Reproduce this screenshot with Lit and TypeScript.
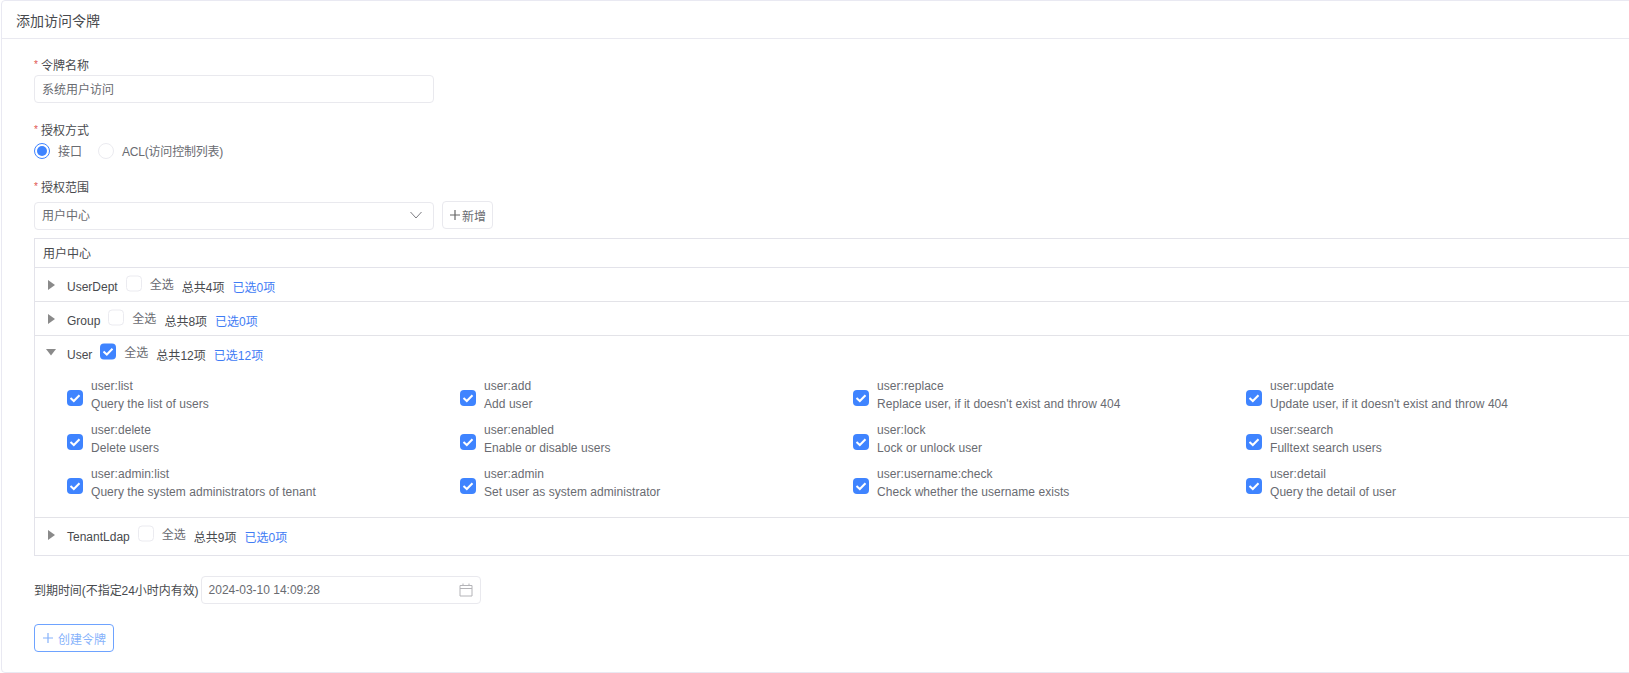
import { LitElement, html, css, svg } from "lit";
import { customElement } from "lit/decorators.js";

const items = [
  ["user:list", "Query the list of users"],
  ["user:add", "Add user"],
  ["user:replace", "Replace user, if it doesn't exist and throw 404"],
  ["user:update", "Update user, if it doesn't exist and throw 404"],
  ["user:delete", "Delete users"],
  ["user:enabled", "Enable or disable users"],
  ["user:lock", "Lock or unlock user"],
  ["user:search", "Fulltext search users"],
  ["user:admin:list", "Query the system administrators of tenant"],
  ["user:admin", "Set user as system administrator"],
  ["user:username:check", "Check whether the username exists"],
  ["user:detail", "Query the detail of user"],
];

const check = svg`<svg class="tick" viewBox="0 0 16 16" width="16" height="16"><path d="M3.5 8 L6.8 11 L12.5 5.2" fill="none" stroke="#fff" stroke-width="2"/></svg>`;

@customElement("app-root")
export class AppRoot extends LitElement {
  static styles = css`
    :host {
      display: block;
      width: 1629px;
      height: 673px;
      overflow: hidden;
      background: #fff;
      font-family: "Liberation Sans", "Noto Sans CJK SC", sans-serif;
      font-size: 12px;
      color: #484a4e;
      box-sizing: border-box;
    }
    * { box-sizing: border-box; }
    .card {
      width: 1700px;
      height: 673px;
      margin-left: 1px;
      border: 1px solid #e9e9f2;
      border-radius: 4px;
      background: #fff;
    }
    .head {
      height: 38px;
      padding-left: 14px;
      display: flex;
      align-items: center;
      font-size: 14px;
      color: #484a4e;
      border-bottom: 1px solid #e9e9f0;
    }
    .body { padding: 15px 0 0 32px; width: 1670px; }
    .label { height: 21px; display: flex; align-items: center; }
    .star { color: #e0544f; width: 7px; font-size: 10px; }
    .input {
      height: 28px;
      border: 1px solid #e9e9ee;
      border-radius: 4px;
      display: flex;
      align-items: center;
      padding: 0 7px 2px;
      color: #696b71;
      background: #fff;
    }
    .w400 { width: 400px; }
    .f1 { margin-bottom: 16px; }
    .radios { display: flex; align-items: center; height: 21px; color: #696b71; margin-bottom: 15px; }
    .radio { width: 16px; height: 16px; border-radius: 50%; border: 1px solid #ebebf0; margin-right: 8px; flex: none; }
    .radio.on { border-color: #3f84ff; display: flex; align-items: center; justify-content: center; }
    .radio.on::after { content: ""; width: 10px; height: 10px; border-radius: 50%; background: #3f84ff; }
    .r1 { margin-right: 16px; }
    .acl { letter-spacing: -0.2px; }
    .selrow { display: flex; align-items: flex-start; margin-top: 5px; margin-bottom: 8px; }
    .sel { justify-content: space-between; padding-right: 11px; padding-bottom: 3px; }
    .add {
      margin-left: 8px;
      margin-top: -1px;
      width: 51px;
      height: 28px;
      border: 1px solid #e9e9ee;
      border-radius: 4px;
      display: flex;
      align-items: center;
      justify-content: center;
      color: #696b71;
      font-size: 12px;
      gap: 1px;
    }
    .box { width: 1640px; border: 1px solid #e3e3ea; }
    .boxhead { height: 29px; padding-left: 8px; padding-bottom: 2px; display: flex; align-items: center; border-bottom: 1px solid #e3e3ea; }
    .row { border-bottom: 1px solid #e3e3e8; }
    .row:last-child { border-bottom: 0; }
    .rowhead { height: 33px; display: flex; align-items: center; padding-left: 13px; }
    .last .rowhead { height: 37px; padding-bottom: 4px; }
    .arrow { width: 19px; flex: none; display: flex; }
    .open-arrow { margin-left: -2px; }
    .name { margin-right: 8px; transform: translateY(2px); }
    .cb {
      width: 16px; height: 16px; flex: none;
      border: 1px solid #ebebf0;
      border-radius: 4px;
      background: #fff;
      display: block;
    }
    .cb.on { background: #3f84ff; border: 0; }
    .tick { display: block; }
    .up { transform: translateY(-1.5px); }
    .all { margin-left: 8px; color: #696b71; margin-right: 8px; transform: translateY(-1px); }
    .total { margin-right: 8px; transform: translateY(2px); }
    .sel-count { color: #3f7cf5; transform: translateY(2px); }
    .grid {
      display: grid;
      grid-template-columns: repeat(4, 393px);
      grid-auto-rows: 44px;
      padding: 5px 0 0 32px;
      height: 148px;
    }
    .item { display: flex; align-items: center; }
    .item .cb { margin-right: 8px; margin-top: 4px; }
    .txt { color: #696b71; line-height: 18px; margin-bottom: 2px; letter-spacing: 0.05px; }
    .txt div { white-space: nowrap; }
    .datef { display: flex; align-items: center; margin-top: 20px; margin-bottom: 20px; }
    .datel { margin-right: 2px; padding-bottom: 1px; white-space: nowrap; letter-spacing: -0.05px; }
    .date { width: 280px; justify-content: space-between; padding-right: 7px; padding-bottom: 0; }
    .create {
      width: 80px;
      height: 28px;
      border: 1px solid #6ea3ff;
      border-radius: 4px;
      color: #86b2fb;
      display: flex;
      align-items: center;
      justify-content: center;
      gap: 4px;
    }
  `;

  cb(on: boolean, up = false) {
    return html`<span class="cb ${on ? "on" : ""} ${up ? "up" : ""}">${on ? check : ""}</span>`;
  }

  row(name: string, total: number, sel: number, open = false, last = false) {
    return html`<div class="row ${last ? "last" : ""}">
      <div class="rowhead">
        <span class="arrow">
          ${open
            ? html`<svg class="open-arrow" width="10" height="7" viewBox="0 0 10 7"><path d="M0 0H10L5 6.5Z" fill="#8a8a8a"/></svg>`
            : html`<svg width="7" height="10" viewBox="0 0 7 10"><path d="M0 0V10L7 5Z" fill="#8a8a8a"/></svg>`}
        </span>
        <span class="name">${name}</span>
        ${this.cb(open, true)}
        <span class="all">全选</span>
        <span class="total">总共${total}项</span>
        <span class="sel-count">已选${sel}项</span>
      </div>
      ${open
        ? html`<div class="grid">
            ${items.map(
              ([a, b]) => html`<div class="item">
                ${this.cb(true)}
                <div class="txt"><div>${a}</div><div>${b}</div></div>
              </div>`
            )}
          </div>`
        : ""}
    </div>`;
  }

  render() {
    return html`<div class="card">
      <div class="head">添加访问令牌</div>
      <div class="body">
        <div class="label"><span class="star">*</span>令牌名称</div>
        <div class="input w400 f1">系统用户访问</div>
        <div class="label"><span class="star">*</span>授权方式</div>
        <div class="radios">
          <span class="radio on"></span><span class="r1">接口</span>
          <span class="radio"></span><span class="acl">ACL(访问控制列表)</span>
        </div>
        <div class="label"><span class="star">*</span>授权范围</div>
        <div class="selrow">
          <div class="input w400 sel">
            <span>用户中心</span>
            <svg width="12" height="8" viewBox="0 0 12 8"><path d="M0.5 1 L6 7 L11.5 1" fill="none" stroke="#7b7b80" stroke-width="1"/></svg>
          </div>
          <div class="add">
            <svg width="12" height="12" viewBox="0 0 12 12"><path d="M6 1V11M1 6H11" stroke="#666" stroke-width="1.2"/></svg>
            <span>新增</span>
          </div>
        </div>
        <div class="box">
          <div class="boxhead">用户中心</div>
          ${this.row("UserDept", 4, 0)}
          ${this.row("Group", 8, 0)}
          ${this.row("User", 12, 12, true)}
          ${this.row("TenantLdap", 9, 0, false, true)}
        </div>
        <div class="datef">
          <span class="datel">到期时间(不指定24小时内有效)</span>
          <div class="input date">
            <span>2024-03-10 14:09:28</span>
            <svg width="14" height="14" viewBox="0 0 14 14"><path d="M1 2.5H13V13H1ZM1 5.5H13M4 0.5V3M10 0.5V3" fill="none" stroke="#b4b4b8" stroke-width="1"/></svg>
          </div>
        </div>
        <div class="create">
          <svg width="12" height="12" viewBox="0 0 12 12"><path d="M6 1V11M1 6H11" stroke="#86b2fb" stroke-width="1.2"/></svg>
          <span>创建令牌</span>
        </div>
      </div>
    </div>`;
  }
}
